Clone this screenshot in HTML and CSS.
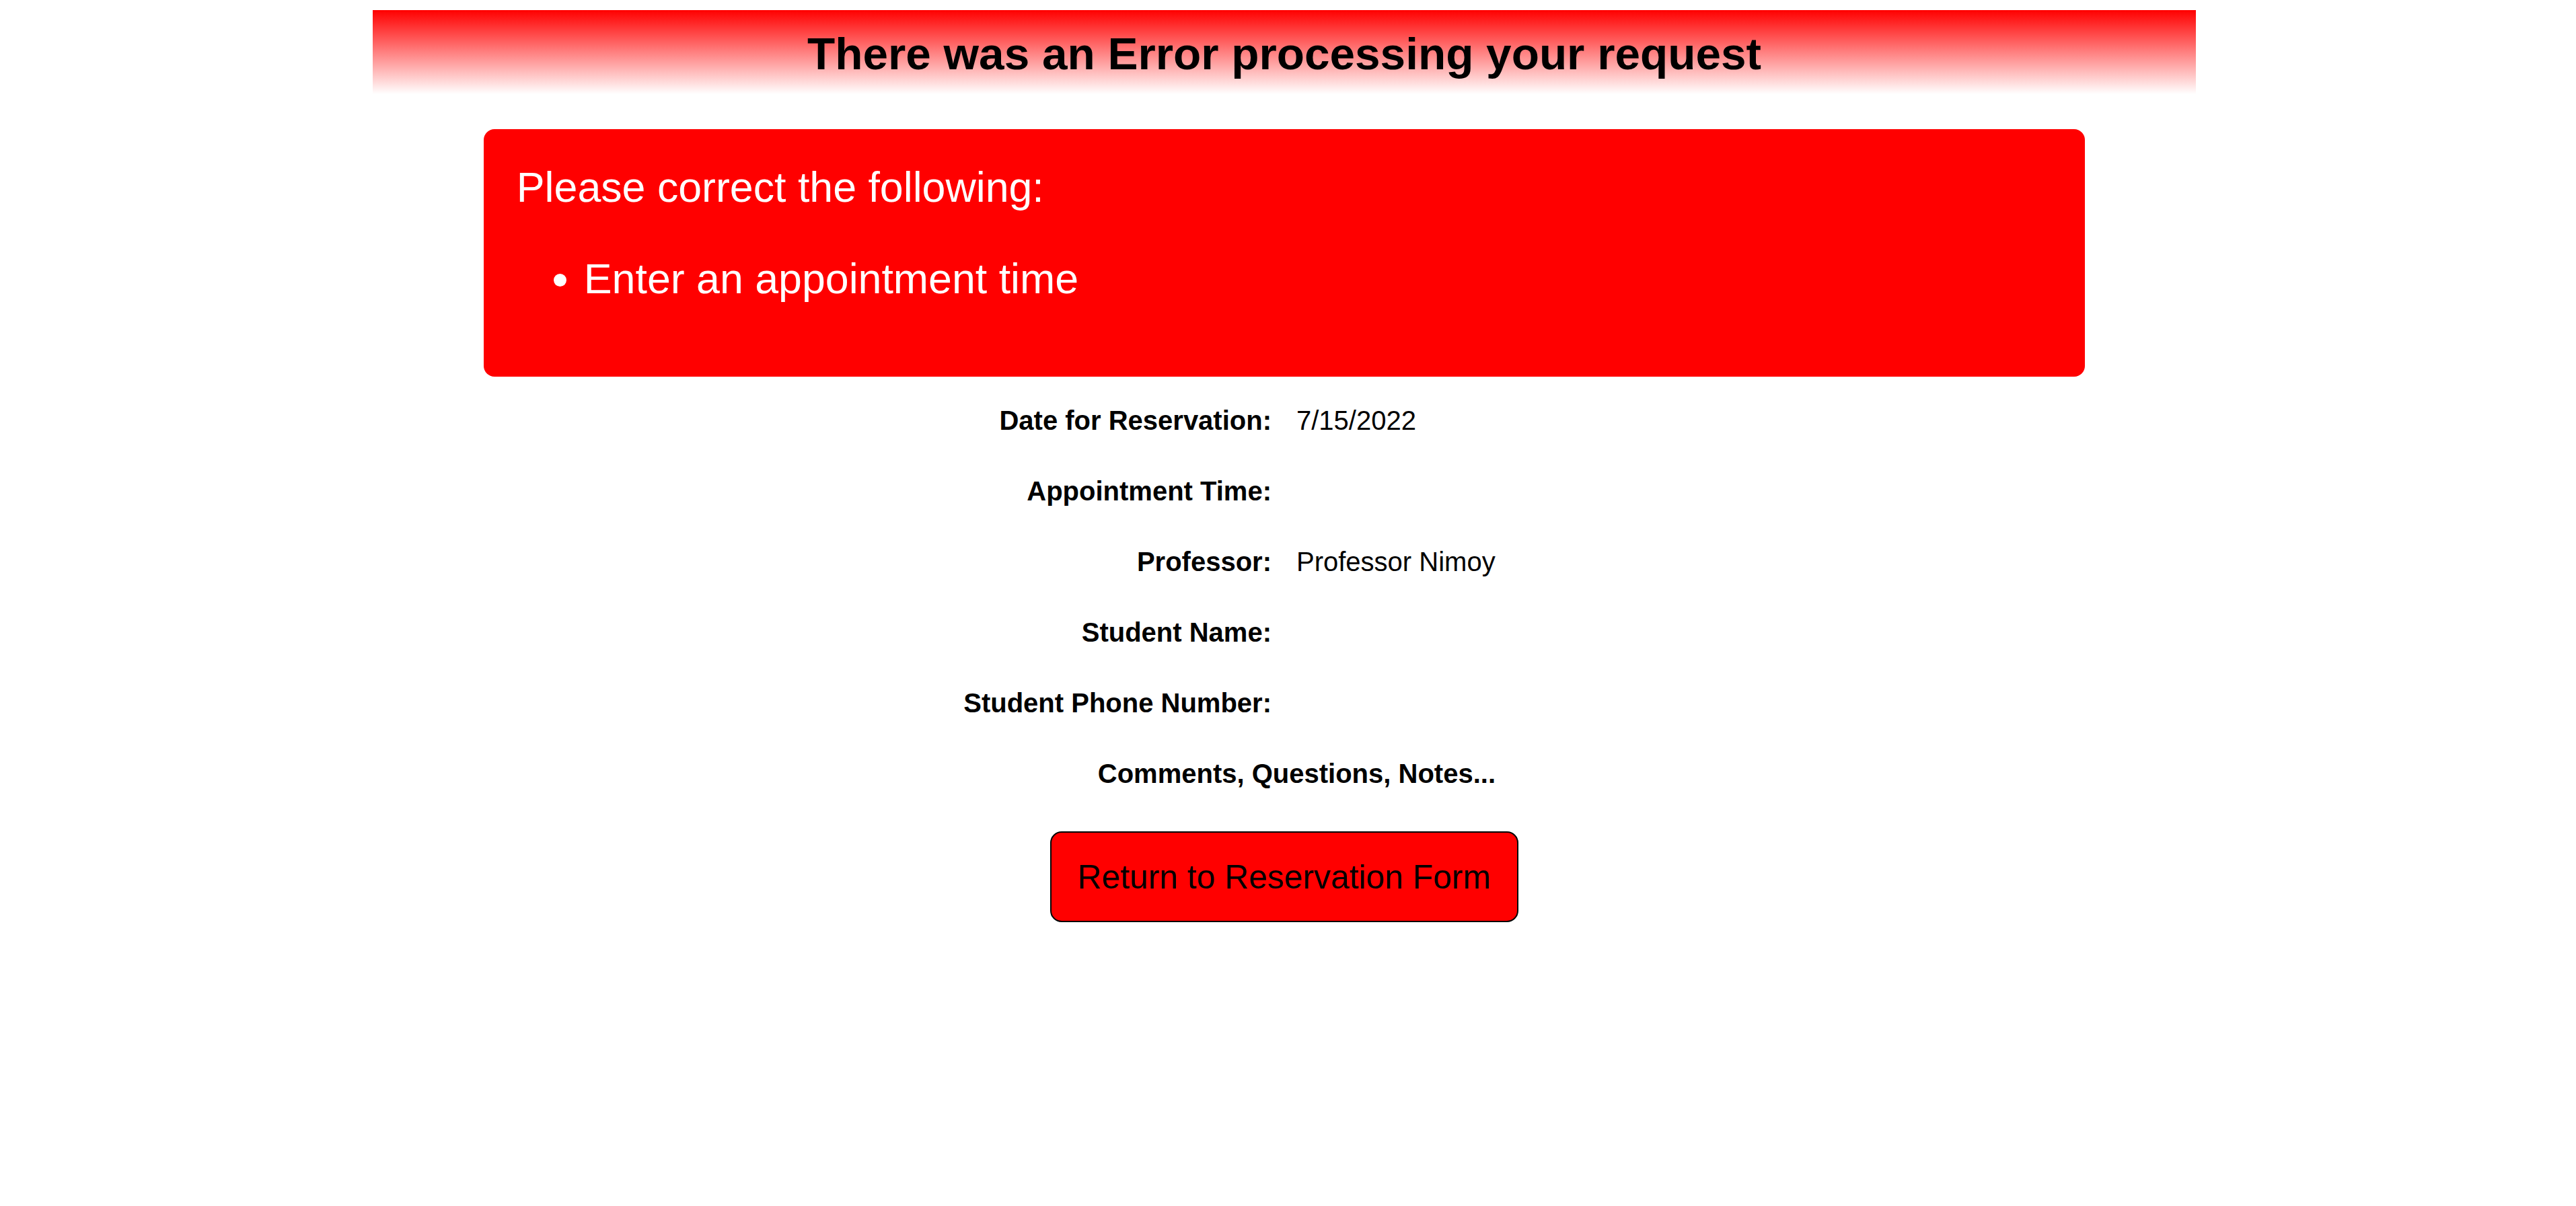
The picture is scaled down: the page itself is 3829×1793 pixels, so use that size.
FILE: index.html
```html
<!DOCTYPE html>
<html lang="en">
<head>
<meta charset="utf-8">
<title>Reservation Error</title>
<link rel="stylesheet" href="styles.css">
</head>
<body>
  <header class="banner">
    <h1 class="banner-title">There was an Error processing your request</h1>
  </header>

  <section class="errors">
    <p class="errors-title">Please correct the following:</p>
    <ul class="errors-list">
      <li>Enter an appointment time</li>
    </ul>
  </section>

  <div class="details">
    <div class="label">Date for Reservation:</div>
    <div class="value">7/15/2022</div>

    <div class="label">Appointment Time:</div>
    <div class="value"></div>

    <div class="label">Professor:</div>
    <div class="value">Professor Nimoy</div>

    <div class="label">Student Name:</div>
    <div class="value"></div>

    <div class="label">Student Phone Number:</div>
    <div class="value"></div>

    <div class="label label-wide">Comments, Questions, Notes...</div>
  </div>

  <div class="actions">
    <button class="return-btn" type="button">Return to Reservation Form</button>
  </div>
</body>
</html>
```

FILE: styles.css
```css
html, body {
  background: #ffffff;
}

body {
  margin: 0;
  padding: 0 11px 0 0;
  font-family: "Liberation Sans", Arial, sans-serif;
  color: #000000;
}

.banner {
  width: 2710px;
  height: 125px;
  margin: 15px auto 0;
  box-sizing: border-box;
  padding-top: 4px;
  background: linear-gradient(to bottom, #ff0000 0%, #ffffff 100%);
}

.banner-title {
  margin: 0;
  font-size: 67.5px;
  font-weight: bold;
  line-height: 121px;
  text-align: center;
}

.errors {
  width: 2380px;
  margin: 52px auto 0;
  box-sizing: border-box;
  height: 368px;
  padding: 50.3px 48.8px 0;
  background: #ff0000;
  border-radius: 16px;
  color: #ffffff;
  font-size: 62.7px;
  line-height: 72px;
}

.errors-title {
  margin: 0 0 64px;
}

.errors-list {
  margin: 0;
  padding-left: 100px;
}

.details {
  display: grid;
  grid-template-columns: 460px 296px;
  column-gap: 37px;
  row-gap: 60px;
  width: max-content;
  margin: 43px 0 0 1430px;
  font-size: 40px;
  line-height: 44.9px;
}

.label {
  font-weight: bold;
  text-align: right;
  white-space: nowrap;
}

.value {
  white-space: nowrap;
  min-height: 44.9px;
}

.label-wide {
  grid-column: 1 / -1;
}

.actions {
  display: flex;
  justify-content: center;
  margin-top: 64px;
}

.return-btn {
  font-family: "Liberation Sans", Arial, sans-serif;
  font-size: 49.8px;
  line-height: 56px;
  color: #000000;
  background: #ff0000;
  border: 2px solid #000000;
  border-radius: 17px;
  padding: 38px 39px 37px;
  margin: 0;
  cursor: pointer;
}
```
